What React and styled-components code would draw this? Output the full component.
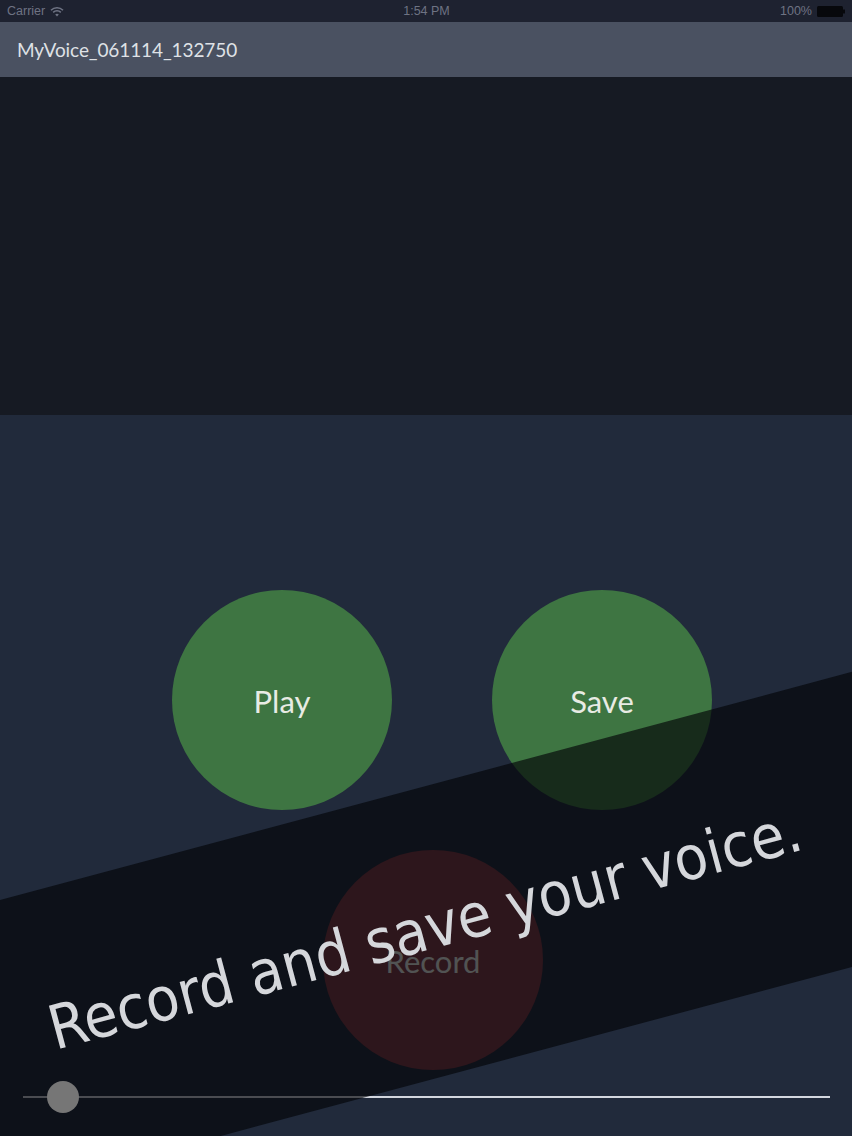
import React from 'react'
import styled, { createGlobalStyle } from 'styled-components'

const GlobalStyle = createGlobalStyle`
  html, body {
    margin: 0;
    padding: 0;
    background: #212a3b;
  }
  * { box-sizing: border-box; }
`

const Screen = styled.div`
  width: 852px;
  height: 1136px;
  display: flex;
  flex-direction: column;
  overflow: hidden;
  font-family: Lato, 'Open Sans', sans-serif;
`

const StatusBar = styled.div`
  height: 22px;
  flex: none;
  background: #1e2230;
  display: grid;
  grid-template-columns: 1fr auto 1fr;
  align-items: center;
  padding: 0 6px 0 7px;
  color: #6e7383;
  font-family: 'Liberation Sans', Arial, sans-serif;
  font-size: 12.5px;
`

const StatusSide = styled.div`
  display: flex;
  align-items: center;
  gap: 5px;
  justify-content: ${p => (p.end ? 'flex-end' : 'flex-start')};
`

const NavBar = styled.div`
  height: 55px;
  flex: none;
  background: #4a5161;
  display: flex;
  align-items: center;
  padding-left: 17px;
`

const NavTitle = styled.div`
  color: #dfe1e6;
  font-size: 19px;
  letter-spacing: -0.1px;
`

const WavePane = styled.div`
  height: 338px;
  flex: none;
  background: #161a23;
`

const Main = styled.div`
  position: relative;
  flex: 1;
  overflow: hidden;
  background: #212a3b;
  display: flex;
  flex-direction: column;
  padding-top: 175px;
`

const CircleRow = styled.div`
  display: flex;
  gap: 100px;
  padding-left: ${p => p.offset}px;
  margin-bottom: ${p => p.space}px;
`

const Circle = styled.div`
  width: 220px;
  height: 220px;
  border-radius: 50%;
  background: ${p => p.color};
  display: flex;
  align-items: center;
  justify-content: center;
  color: #e8ebe4;
  font-size: 31px;
  padding-top: 2px;
`

const SliderRow = styled.div`
  position: relative;
  height: 32px;
  margin: 11px 22px 0 23px;
  display: flex;
  align-items: center;
`

const Track = styled.div`
  flex: 1;
  height: 2px;
  background: #d3d7df;
`

const Thumb = styled.div`
  position: absolute;
  left: 24px;
  top: 0;
  width: 32px;
  height: 32px;
  border-radius: 50%;
  background: #767676;
  z-index: 3;
`

const Band = styled.div`
  position: absolute;
  z-index: 2;
  left: 50%;
  top: 376px;
  width: 1500px;
  height: 285px;
  margin-left: -750px;
  background: rgba(3, 4, 8, 0.66);
  transform: rotate(-15deg);
  display: flex;
  align-items: center;
  justify-content: center;
  padding-bottom: 10px;
`

const BandText = styled.div`
  color: #d5d7db;
  font-family: 'DejaVu Sans Condensed', 'DejaVu Sans', sans-serif;
  font-stretch: condensed;
  font-size: 61px;
  line-height: 1;
  white-space: nowrap;
`

const Wifi = () => (
  <svg width="14" height="11" viewBox="0 0 14 11">
    <path d="M1 4.2a8.5 8.5 0 0 1 12 0" stroke="#6e7383" strokeWidth="1.6" fill="none" />
    <path d="M3.2 6.4a5.3 5.3 0 0 1 7.6 0" stroke="#6e7383" strokeWidth="1.6" fill="none" />
    <path d="M7 10.5 5.2 8.6a2.6 2.6 0 0 1 3.6 0z" fill="#6e7383" />
  </svg>
)

const Battery = () => (
  <svg width="29" height="11" viewBox="0 0 29 11">
    <rect x="0" y="0" width="26" height="11" rx="1.5" fill="#07080c" />
    <rect x="26" y="3.5" width="2" height="4" fill="#07080c" />
  </svg>
)

const App = () => {
  return (
    <>
      <GlobalStyle />
      <Screen>
        <StatusBar>
          <StatusSide>
            Carrier <Wifi />
          </StatusSide>
          <div>1:54 PM</div>
          <StatusSide end>
            100% <Battery />
          </StatusSide>
        </StatusBar>
        <NavBar>
          <NavTitle>MyVoice_061114_132750</NavTitle>
        </NavBar>
        <WavePane />
        <Main>
          <CircleRow offset={172} space={40}>
            <Circle color="#3e7542">Play</Circle>
            <Circle color="#3e7542">Save</Circle>
          </CircleRow>
          <CircleRow offset={323} space={0}>
            <Circle color="#7e3843">Record</Circle>
          </CircleRow>
          <SliderRow>
            <Track />
            <Thumb />
          </SliderRow>
          <Band>
            <BandText>Record and save your voice.</BandText>
          </Band>
        </Main>
      </Screen>
    </>
  )
}

export default App
